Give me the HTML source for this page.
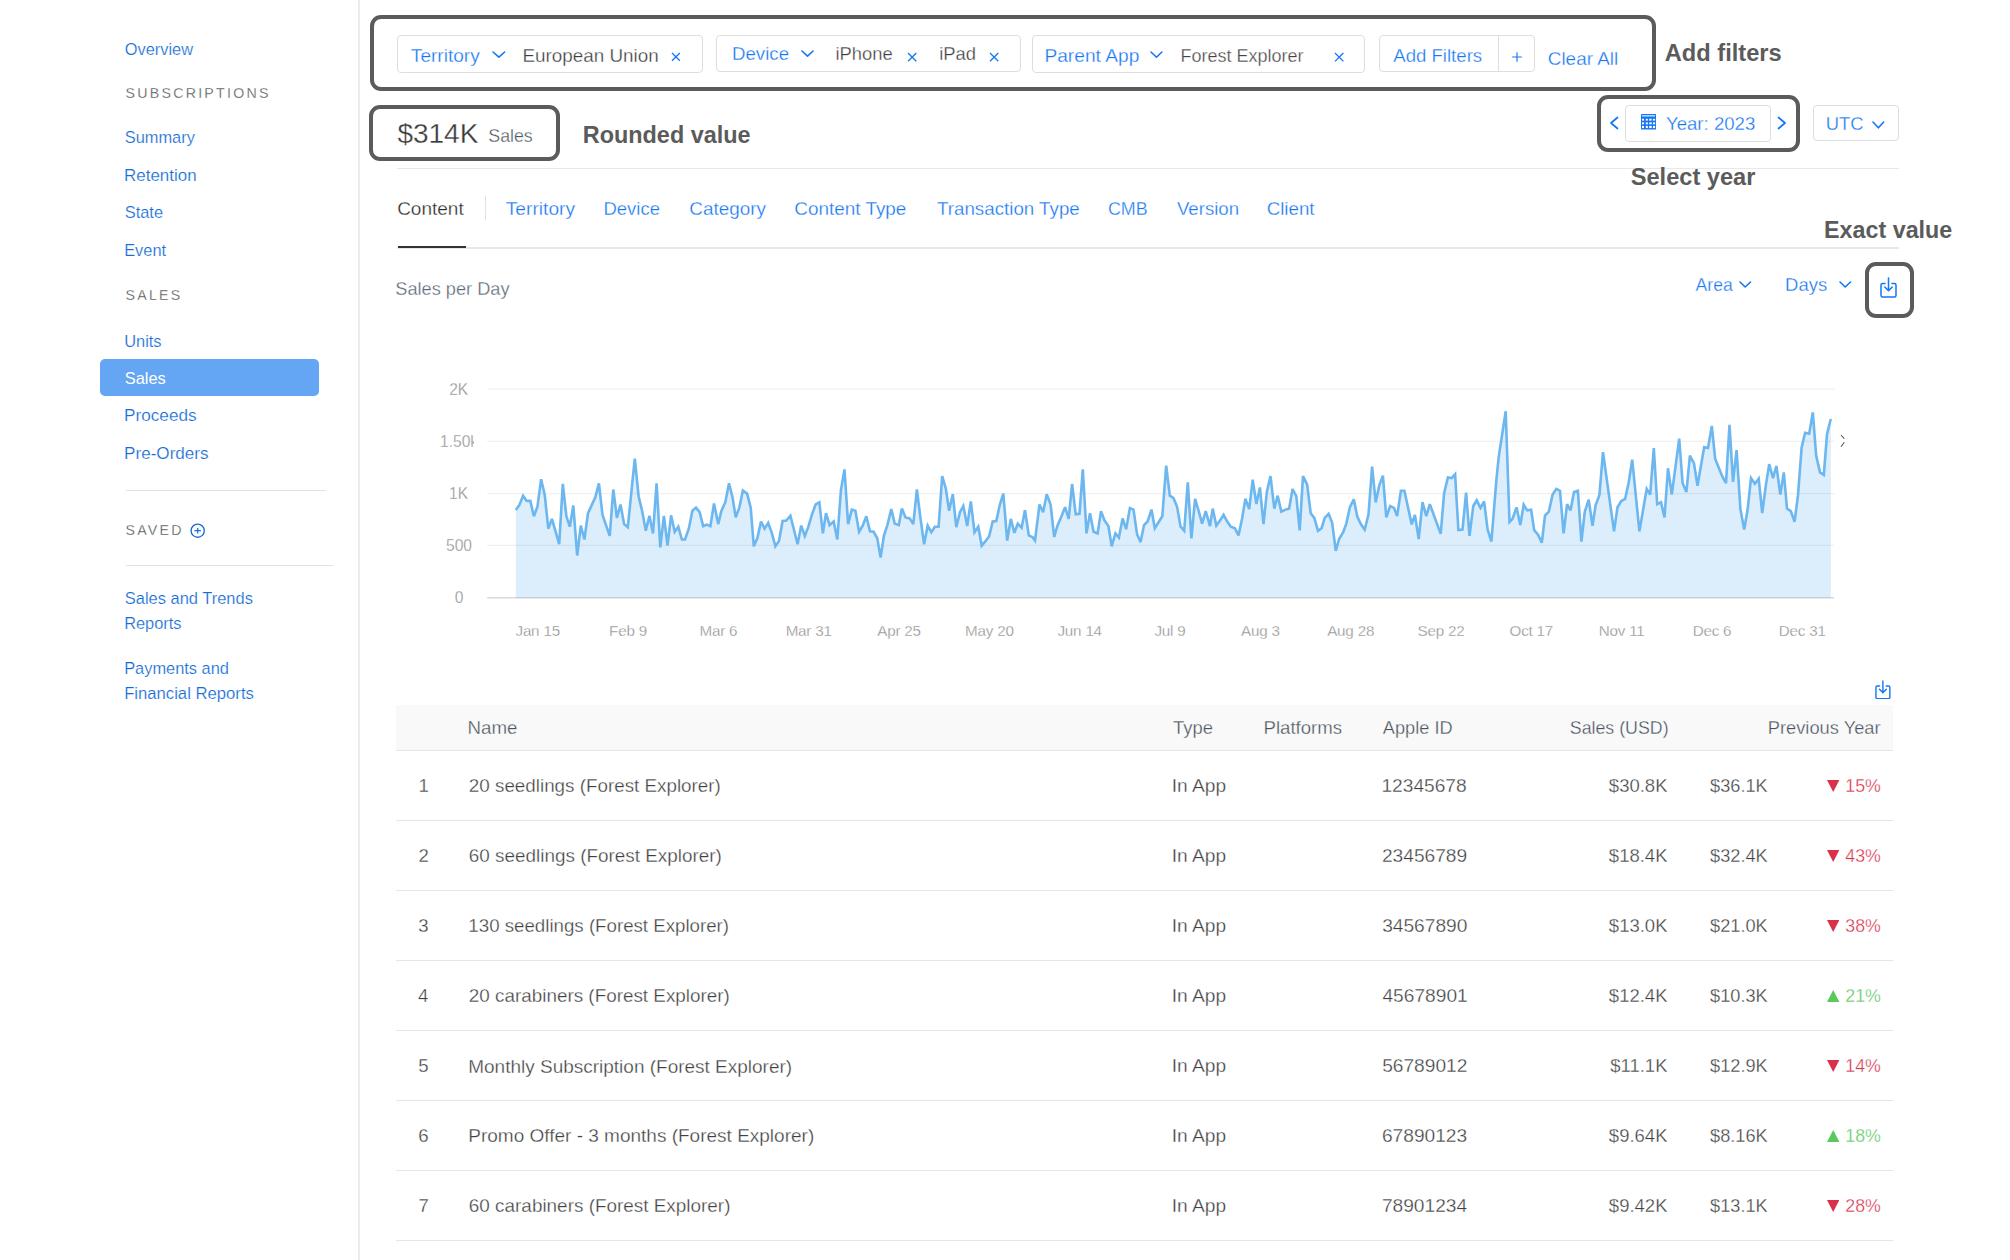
<!DOCTYPE html>
<html><head><meta charset="utf-8"><title>Sales</title>
<style>
html,body{margin:0;padding:0;background:#fff;overflow:hidden;}
body{width:2010px;height:1260px;position:relative;overflow:hidden;font-family:"Liberation Sans",sans-serif;}
.t{position:absolute;line-height:1;white-space:nowrap;-webkit-text-stroke:0.3px #fff;}
</style></head><body>
<div style="position:absolute;left:358.00px;top:0.00px;width:1.50px;height:1260.00px;background:#ececec;"></div>
<div class="t" style="top:41px;font-size:16.40px;color:#146cd6;left:124.72px;-webkit-text-stroke:0.2px #fff;">Overview</div>
<div class="t" style="top:86px;font-size:14.20px;color:#4a4a4a;letter-spacing:2.25px;left:125.50px;">SUBSCRIPTIONS</div>
<div class="t" style="top:129px;font-size:16.40px;color:#146cd6;left:124.76px;-webkit-text-stroke:0.2px #fff;">Summary</div>
<div class="t" style="top:168px;font-size:16.93px;color:#146cd6;left:124.11px;-webkit-text-stroke:0.2px #fff;">Retention</div>
<div class="t" style="top:204px;font-size:16.40px;color:#146cd6;left:124.76px;-webkit-text-stroke:0.2px #fff;">State</div>
<div class="t" style="top:242px;font-size:16.40px;color:#146cd6;left:124.15px;-webkit-text-stroke:0.2px #fff;">Event</div>
<div class="t" style="top:288px;font-size:14.20px;color:#4a4a4a;letter-spacing:2.25px;left:125.50px;">SALES</div>
<div class="t" style="top:333px;font-size:16.40px;color:#146cd6;left:124.23px;-webkit-text-stroke:0.2px #fff;">Units</div>
<div style="position:absolute;left:100.40px;top:358.60px;width:219.00px;height:37.00px;background:#64a5f4;border-radius:5px;"></div>
<div class="t" style="top:370px;font-size:16.40px;color:#ffffff;left:124.76px;-webkit-text-stroke:0;">Sales</div>
<div class="t" style="top:407px;font-size:17.17px;color:#146cd6;left:124.09px;-webkit-text-stroke:0.2px #fff;">Proceeds</div>
<div class="t" style="top:445px;font-size:17.09px;color:#146cd6;left:124.10px;-webkit-text-stroke:0.2px #fff;">Pre-Orders</div>
<div style="position:absolute;left:125.50px;top:490.00px;width:200.30px;height:1.00px;background:#e2e2e2;"></div>
<div class="t" style="top:523px;font-size:14.20px;color:#4a4a4a;letter-spacing:2.25px;left:125.50px;">SAVED</div>
<svg style="position:absolute;left:189.50px;top:523.00px;" width="15.40" height="15.40" viewBox="0 0 15.40 15.40"><circle cx="7.7" cy="7.7" r="6.6" fill="none" stroke="#146cd6" stroke-width="1.35"/><path d="M7.7 4.9v5.6M4.5 7.7h6.4" stroke="#146cd6" stroke-width="1.2"/></svg>
<div style="position:absolute;left:125.50px;top:565.30px;width:207.00px;height:1.00px;background:#e2e2e2;"></div>
<div class="t" style="top:590px;font-size:16.48px;color:#146cd6;left:124.75px;-webkit-text-stroke:0.2px #fff;">Sales and Trends</div>
<div class="t" style="top:615px;font-size:16.40px;color:#146cd6;left:124.15px;-webkit-text-stroke:0.2px #fff;">Reports</div>
<div class="t" style="top:660px;font-size:16.40px;color:#146cd6;left:124.15px;-webkit-text-stroke:0.2px #fff;">Payments and</div>
<div class="t" style="top:686px;font-size:16.68px;color:#146cd6;left:124.13px;-webkit-text-stroke:0.2px #fff;">Financial Reports</div>
<div style="position:absolute;left:370.00px;top:15.00px;width:1286.00px;height:76.00px;box-sizing:border-box;border:4px solid #5b5b5b;border-radius:11px;"></div>
<div style="position:absolute;left:397.00px;top:35.30px;width:306.00px;height:38.00px;box-sizing:border-box;border:1.5px solid #dedede;border-radius:4px;background:#fff;"></div>
<div class="t" style="top:46px;font-size:19.07px;color:#1476f2;left:410.87px;">Territory</div>
<svg style="position:absolute;left:492.30px;top:51.30px;" width="13.70" height="7.10" viewBox="0 0 13.70 7.10"><polyline points="1,1 6.9,6.1 12.7,1" fill="none" stroke="#1476f2" stroke-width="1.6" stroke-linecap="round" stroke-linejoin="round"/></svg>
<div class="t" style="top:47px;font-size:18.87px;color:#3d3d3d;left:522.45px;">European Union</div>
<svg style="position:absolute;left:671.30px;top:52.40px;" width="9.80" height="9.80" viewBox="0 0 9.80 9.80"><path d="M1 1L8.8 8.8M8.8 1L1 8.8" stroke="#1476f2" stroke-width="1.3" stroke-linecap="butt"/></svg>
<div style="position:absolute;left:715.60px;top:35.20px;width:305.00px;height:37.20px;box-sizing:border-box;border:1.5px solid #dedede;border-radius:4px;background:#fff;"></div>
<div class="t" style="top:45px;font-size:18.70px;color:#1476f2;left:731.97px;">Device</div>
<svg style="position:absolute;left:801.30px;top:50.20px;" width="13.10" height="7.10" viewBox="0 0 13.10 7.10"><polyline points="1,1 6.5,6.1 12.1,1" fill="none" stroke="#1476f2" stroke-width="1.6" stroke-linecap="round" stroke-linejoin="round"/></svg>
<div class="t" style="top:45px;font-size:18.40px;color:#3d3d3d;left:835.47px;">iPhone</div>
<svg style="position:absolute;left:907.20px;top:51.60px;" width="10.30" height="10.30" viewBox="0 0 10.30 10.30"><path d="M1 1L9.3 9.3M9.3 1L1 9.3" stroke="#1476f2" stroke-width="1.3" stroke-linecap="butt"/></svg>
<div class="t" style="top:45px;font-size:18.40px;color:#3d3d3d;left:939.27px;">iPad</div>
<svg style="position:absolute;left:989.20px;top:51.60px;" width="10.30" height="10.30" viewBox="0 0 10.30 10.30"><path d="M1 1L9.3 9.3M9.3 1L1 9.3" stroke="#1476f2" stroke-width="1.3" stroke-linecap="butt"/></svg>
<div style="position:absolute;left:1032.20px;top:35.30px;width:332.60px;height:37.80px;box-sizing:border-box;border:1.5px solid #dedede;border-radius:4px;background:#fff;"></div>
<div class="t" style="top:46px;font-size:19.18px;color:#1476f2;left:1044.43px;">Parent App</div>
<svg style="position:absolute;left:1150.40px;top:51.10px;" width="12.90" height="7.30" viewBox="0 0 12.90 7.30"><polyline points="1,1 6.5,6.3 11.9,1" fill="none" stroke="#1476f2" stroke-width="1.6" stroke-linecap="round" stroke-linejoin="round"/></svg>
<div class="t" style="top:47px;font-size:18.00px;color:#454545;left:1180.52px;">Forest Explorer</div>
<svg style="position:absolute;left:1334.30px;top:52.10px;" width="10.40" height="10.40" viewBox="0 0 10.40 10.40"><path d="M1 1L9.4 9.4M9.4 1L1 9.4" stroke="#1476f2" stroke-width="1.3" stroke-linecap="butt"/></svg>
<div style="position:absolute;left:1378.60px;top:35.20px;width:156.00px;height:36.50px;box-sizing:border-box;border:1.5px solid #dedede;border-radius:4px;background:#fff;"></div>
<div style="position:absolute;left:1498.00px;top:35.20px;width:1.20px;height:36.50px;background:#dedede;"></div>
<div class="t" style="top:47px;font-size:18.60px;color:#1476f2;left:1393.26px;">Add Filters</div>
<svg style="position:absolute;left:1510.60px;top:50.50px;" width="12.00" height="12.00" viewBox="0 0 12.00 12.00"><path d="M6 1.2v9.6M1.2 6h9.6" stroke="#1476f2" stroke-width="1.15"/></svg>
<div class="t" style="top:50px;font-size:18.93px;color:#1476f2;left:1547.74px;">Clear All</div>
<div class="t" style="top:42px;font-size:23.65px;color:#5b5b5b;font-weight:700;-webkit-text-stroke:0;left:1664.81px;">Add filters</div>
<div style="position:absolute;left:368.60px;top:105.20px;width:191.40px;height:55.50px;box-sizing:border-box;border:4px solid #5b5b5b;border-radius:11px;"></div>
<div class="t" style="top:120px;font-size:28.00px;color:#3a3a3a;left:397.40px;">$314K</div>
<div class="t" style="top:128px;font-size:17.80px;color:#4d5864;left:488.29px;">Sales</div>
<div class="t" style="top:124px;font-size:23.40px;color:#5b5b5b;font-weight:700;-webkit-text-stroke:0;left:582.83px;">Rounded value</div>
<div style="position:absolute;left:397.00px;top:167.60px;width:1502.00px;height:1.50px;background:#e8e8e8;"></div>
<div style="position:absolute;left:1597.20px;top:95.10px;width:202.60px;height:57.00px;box-sizing:border-box;border:4px solid #5b5b5b;border-radius:11px;"></div>
<svg style="position:absolute;left:1609.00px;top:116.00px;" width="11.00" height="14.00" viewBox="0 0 11.00 14.00"><polyline points="8.5,1.5 2,7 8.5,12.5" fill="none" stroke="#1476f2" stroke-width="1.7" stroke-linecap="round" stroke-linejoin="round"/></svg>
<div style="position:absolute;left:1624.70px;top:105.10px;width:146.00px;height:36.60px;box-sizing:border-box;border:1.5px solid #dedede;border-radius:4px;background:#fff;"></div>
<svg style="position:absolute;left:1641.00px;top:114.40px;" width="15.10" height="15.50" viewBox="0 0 15.10 15.50"><rect x="0" y="0" width="15.1" height="15.5" rx="0.6" fill="#1476f2"/><rect x="1.0" y="1.3" width="13.1" height="1.1" fill="#fff"/><rect x="1.0" y="4.8" width="2.0" height="1.8" fill="#fff"/><rect x="1.0" y="8.4" width="2.0" height="1.9" fill="#fff"/><rect x="1.0" y="11.9" width="2.0" height="2.2" fill="#fff"/><rect x="4.8" y="4.8" width="2.0" height="1.8" fill="#fff"/><rect x="4.8" y="8.4" width="2.0" height="1.9" fill="#fff"/><rect x="4.8" y="11.9" width="2.0" height="2.2" fill="#fff"/><rect x="8.2" y="4.8" width="2.5" height="1.8" fill="#fff"/><rect x="8.2" y="8.4" width="2.5" height="1.9" fill="#fff"/><rect x="8.2" y="11.9" width="2.5" height="2.2" fill="#fff"/><rect x="11.9" y="4.8" width="2.2" height="1.8" fill="#fff"/><rect x="11.9" y="8.4" width="2.2" height="1.9" fill="#fff"/><rect x="11.9" y="11.9" width="2.2" height="2.2" fill="#fff"/></svg>
<div class="t" style="top:115px;font-size:18.60px;color:#1476f2;left:1665.99px;">Year: 2023</div>
<svg style="position:absolute;left:1775.60px;top:116.00px;" width="11.00" height="14.00" viewBox="0 0 11.00 14.00"><polyline points="2.5,1.5 9,7 2.5,12.5" fill="none" stroke="#1476f2" stroke-width="1.7" stroke-linecap="round" stroke-linejoin="round"/></svg>
<div style="position:absolute;left:1812.60px;top:105.10px;width:86.00px;height:35.50px;box-sizing:border-box;border:1.5px solid #dedede;border-radius:4px;background:#fff;"></div>
<div class="t" style="top:115px;font-size:18.40px;color:#1476f2;left:1825.78px;">UTC</div>
<svg style="position:absolute;left:1872.40px;top:120.80px;" width="12.70" height="7.80" viewBox="0 0 12.70 7.80"><polyline points="1,1 6.4,6.8 11.7,1" fill="none" stroke="#1476f2" stroke-width="1.6" stroke-linecap="round" stroke-linejoin="round"/></svg>
<div class="t" style="top:166px;font-size:23.60px;color:#5b5b5b;font-weight:700;-webkit-text-stroke:0;left:1630.72px;">Select year</div>
<div class="t" style="top:199px;font-size:19.00px;color:#262626;left:397.14px;">Content</div>
<div style="position:absolute;left:485.20px;top:195.70px;width:1.20px;height:24.30px;background:#e2e2e2;"></div>
<div class="t" style="top:199px;font-size:19.20px;color:#1476f2;left:505.77px;">Territory</div>
<div class="t" style="top:200px;font-size:18.50px;color:#1476f2;left:603.48px;">Device</div>
<div class="t" style="top:200px;font-size:18.90px;color:#1476f2;left:689.24px;">Category</div>
<div class="t" style="top:200px;font-size:18.90px;color:#1476f2;left:794.34px;">Content Type</div>
<div class="t" style="top:200px;font-size:18.75px;color:#1476f2;left:936.98px;">Transaction Type</div>
<div class="t" style="top:201px;font-size:17.90px;color:#1476f2;left:1107.89px;">CMB</div>
<div class="t" style="top:200px;font-size:18.65px;color:#1476f2;left:1176.92px;">Version</div>
<div class="t" style="top:200px;font-size:18.75px;color:#1476f2;left:1266.65px;">Client</div>
<div style="position:absolute;left:397.00px;top:247.00px;width:1502.00px;height:1.50px;background:#e8e8e8;"></div>
<div style="position:absolute;left:398.00px;top:245.80px;width:67.60px;height:2.60px;background:#333;"></div>
<div class="t" style="top:219px;font-size:23.30px;color:#5b5b5b;font-weight:700;-webkit-text-stroke:0;left:1824.04px;">Exact value</div>
<div class="t" style="top:280px;font-size:18.20px;color:#5b6776;left:395.27px;">Sales per Day</div>
<div class="t" style="top:277px;font-size:17.60px;color:#1476f2;left:1695.57px;">Area</div>
<svg style="position:absolute;left:1739.00px;top:281.10px;" width="12.50" height="7.00" viewBox="0 0 12.50 7.00"><polyline points="1,1 6.2,6.0 11.5,1" fill="none" stroke="#1476f2" stroke-width="1.6" stroke-linecap="round" stroke-linejoin="round"/></svg>
<div class="t" style="top:276px;font-size:18.52px;color:#1476f2;left:1785.08px;">Days</div>
<svg style="position:absolute;left:1839.30px;top:281.10px;" width="12.50" height="7.00" viewBox="0 0 12.50 7.00"><polyline points="1,1 6.2,6.0 11.5,1" fill="none" stroke="#1476f2" stroke-width="1.6" stroke-linecap="round" stroke-linejoin="round"/></svg>
<div style="position:absolute;left:1865.30px;top:262.20px;width:48.40px;height:55.80px;box-sizing:border-box;border:4px solid #5b5b5b;border-radius:11px;"></div>
<svg style="position:absolute;left:1880.00px;top:277.00px" width="17.00" height="21.00" viewBox="0 0 17 21"><path d="M5 6.5H2.5Q1 6.5 1 8V18.5Q1 20 2.5 20H14.5Q16 20 16 18.5V8Q16 6.5 14.5 6.5H12" fill="none" stroke="#1476f2" stroke-width="1.5" stroke-linecap="round"/><path d="M8.5 1V13.5M4.8 10L8.5 13.7L12.2 10" fill="none" stroke="#1476f2" stroke-width="1.5" stroke-linecap="round" stroke-linejoin="round"/></svg>
<div class="t" style="top:382px;font-size:15.60px;color:#8c8c8c;left:-41.30px;width:1000px;text-align:center;">2K</div>
<div style="position:absolute;left:430px;top:434.00px;width:44px;height:20px;overflow:hidden;"><div class="t" style="left:0;top:0;width:1000px;text-align:left;font-size:15.6px;color:#8c8c8c;left:10px">1.50k</div></div>
<div class="t" style="top:486px;font-size:15.60px;color:#8c8c8c;left:-41.51px;width:1000px;text-align:center;">1K</div>
<div class="t" style="top:538px;font-size:15.60px;color:#8c8c8c;left:-41.01px;width:1000px;text-align:center;">500</div>
<div class="t" style="top:590px;font-size:15.60px;color:#8c8c8c;left:-41.00px;width:1000px;text-align:center;">0</div>
<svg style="position:absolute;left:0.00px;top:0.00px;pointer-events:none;" width="2010.00" height="1260.00" viewBox="0 0 2010.00 1260.00"><polygon points="515.8,597.8 515.8,510.1 519.4,505.0 523.1,495.7 526.7,500.9 530.3,500.9 533.9,516.3 537.5,506.5 541.1,479.2 544.7,494.7 548.3,528.7 551.9,518.9 559.2,544.2 562.8,483.8 566.4,516.3 569.8,526.7 573.3,505.5 577.2,555.5 580.8,525.6 584.4,539.5 588.0,513.2 595.3,497.3 598.9,483.3 602.5,514.8 609.7,535.9 613.3,489.5 616.9,517.9 620.5,504.5 624.1,524.1 627.8,527.2 634.8,458.6 638.6,496.2 642.2,511.2 645.8,530.8 649.4,515.8 653.0,533.4 656.6,483.3 660.3,547.3 663.9,515.8 667.5,545.7 671.1,515.3 674.7,531.8 678.3,526.7 681.9,539.5 685.0,539.5 688.8,528.7 692.4,510.7 696.0,507.6 699.6,512.2 703.2,526.1 706.8,524.6 710.4,526.1 714.0,503.4 718.2,524.1 721.3,511.2 725.4,501.9 729.0,483.3 732.6,497.8 735.7,517.4 739.3,507.6 742.9,490.5 747.1,493.6 750.7,507.6 753.8,546.3 757.4,538.0 761.0,521.5 764.6,528.7 768.2,523.0 771.8,532.8 775.4,546.3 779.0,541.1 782.6,521.0 786.3,520.5 790.4,515.8 797.6,544.2 801.2,525.6 804.8,535.9 808.4,526.7 812.0,514.3 815.7,504.5 819.3,502.4 822.9,533.4 826.0,513.2 829.6,525.1 833.7,521.5 837.3,539.5 840.9,490.5 844.5,469.4 848.1,524.1 851.8,509.6 855.4,510.7 859.1,531.8 862.7,525.6 866.3,516.3 870.0,531.3 873.6,531.8 877.2,538.0 880.6,557.6 883.9,535.9 887.5,524.6 891.3,509.1 894.7,523.6 898.8,525.1 901.9,508.6 905.5,517.4 909.7,518.4 913.3,524.1 916.9,489.5 920.5,518.4 924.1,544.2 927.7,525.6 931.3,532.3 934.9,526.7 938.6,526.7 942.2,476.1 945.8,488.5 949.1,510.7 952.8,494.2 956.3,527.2 960.0,512.2 963.3,506.0 967.2,526.1 970.8,501.4 974.5,532.3 978.3,526.7 981.7,545.7 985.5,541.1 989.1,536.5 992.7,521.5 996.3,521.0 999.9,504.5 1003.3,493.6 1007.2,540.6 1010.8,518.9 1014.4,532.8 1017.8,523.6 1021.6,527.7 1025.0,510.1 1028.8,535.4 1032.4,537.0 1035.0,540.6 1039.5,504.5 1043.1,512.2 1046.7,494.2 1050.6,504.5 1054.2,537.0 1057.6,525.1 1061.5,516.3 1065.1,507.1 1068.7,518.9 1072.1,483.8 1075.7,514.3 1079.5,513.8 1082.8,469.4 1086.5,533.4 1090.0,513.2 1093.6,531.8 1097.6,533.4 1101.0,511.2 1104.5,520.5 1108.4,526.1 1111.7,546.3 1115.4,533.4 1118.9,537.5 1122.6,518.4 1126.1,529.2 1129.9,508.1 1133.5,509.6 1137.1,534.4 1140.6,542.1 1144.0,525.1 1147.6,521.5 1151.5,509.6 1154.8,528.2 1158.7,522.0 1162.3,516.3 1166.2,465.6 1169.8,495.7 1173.4,497.8 1177.0,506.5 1180.6,526.7 1184.2,530.8 1187.8,482.3 1191.4,538.5 1195.1,498.8 1198.7,511.2 1202.1,523.6 1205.7,511.2 1210.0,526.1 1212.7,508.6 1216.3,525.6 1220.0,520.5 1223.6,514.8 1227.2,521.5 1230.8,526.7 1234.9,528.2 1238.5,535.4 1242.1,518.4 1245.4,498.8 1249.2,509.1 1252.7,479.7 1256.4,504.0 1259.9,487.5 1263.5,524.1 1266.9,491.6 1270.5,476.1 1274.3,508.6 1277.7,495.7 1281.3,511.7 1285.5,509.6 1289.1,508.6 1292.5,489.0 1296.3,496.2 1299.7,530.3 1303.0,476.1 1307.1,484.4 1310.7,513.2 1314.3,517.9 1318.0,530.8 1321.6,528.2 1324.7,517.9 1328.6,513.8 1332.1,522.5 1335.8,550.9 1339.1,539.0 1343.2,532.3 1346.3,523.6 1349.9,507.1 1353.8,499.3 1357.2,516.3 1360.8,524.1 1364.7,529.7 1368.5,514.3 1372.1,466.6 1375.7,502.4 1379.3,485.4 1382.9,475.6 1386.3,517.4 1390.2,506.0 1394.0,507.9 1397.1,516.1 1400.9,490.8 1404.4,490.8 1411.7,524.4 1414.9,514.9 1418.7,539.0 1422.5,502.2 1426.3,516.1 1429.8,504.1 1440.7,533.9 1444.1,493.3 1447.9,477.4 1451.7,478.1 1455.1,474.3 1458.4,530.1 1462.5,529.5 1466.1,492.7 1469.5,535.8 1473.3,506.0 1476.7,500.3 1480.5,507.9 1484.1,501.5 1487.6,529.5 1491.4,541.5 1496.5,478.7 1498.7,457.1 1505.7,411.2 1509.5,521.9 1512.6,518.7 1516.5,507.3 1520.3,525.0 1523.7,504.7 1527.2,510.4 1531.1,509.8 1534.2,530.1 1538.0,534.6 1541.8,542.8 1545.0,515.5 1548.8,511.7 1552.6,494.6 1556.4,488.9 1560.0,490.8 1563.6,533.3 1567.1,504.1 1570.5,510.5 1574.0,492.1 1577.9,490.8 1581.4,541.6 1584.8,511.7 1588.7,499.7 1592.5,525.7 1595.6,505.4 1599.4,495.2 1603.0,452.1 1614.0,531.4 1617.5,507.3 1621.3,501.0 1625.1,499.0 1628.7,482.5 1632.2,459.7 1639.4,531.4 1646.7,488.9 1650.2,494.6 1653.8,448.0 1657.2,504.1 1661.0,502.2 1664.5,517.5 1668.0,468.3 1671.8,494.6 1679.2,438.7 1682.6,483.2 1686.4,492.1 1689.9,455.6 1694.0,463.5 1697.5,485.7 1704.2,447.0 1708.0,448.0 1711.8,426.0 1715.2,459.0 1722.2,476.2 1726.0,483.2 1729.5,424.8 1733.0,481.9 1736.6,450.2 1740.4,509.2 1744.2,529.5 1747.6,509.8 1751.0,478.1 1754.9,483.8 1758.7,478.7 1762.2,513.0 1766.0,484.4 1769.2,464.1 1773.0,478.1 1776.4,466.0 1780.3,494.6 1783.8,472.4 1787.0,508.6 1790.8,511.1 1794.6,521.7 1798.0,495.2 1801.6,447.6 1805.1,432.8 1809.2,433.7 1812.8,412.4 1816.2,455.9 1820.0,472.4 1823.8,474.9 1827.0,434.3 1830.8,419.0 1830.8,597.8" fill="#dcedfb"/><rect x="487.2" y="388.45" width="1347" height="1.3" fill="rgba(0,0,0,0.06)"/><rect x="487.2" y="440.65" width="1347" height="1.3" fill="rgba(0,0,0,0.06)"/><rect x="487.2" y="492.95" width="1347" height="1.3" fill="rgba(0,0,0,0.06)"/><rect x="487.2" y="544.75" width="1347" height="1.3" fill="rgba(0,0,0,0.06)"/><rect x="487.2" y="597.05" width="1347" height="1.5" fill="rgba(0,20,40,0.16)"/><polyline points="515.8,510.1 519.4,505.0 523.1,495.7 526.7,500.9 530.3,500.9 533.9,516.3 537.5,506.5 541.1,479.2 544.7,494.7 548.3,528.7 551.9,518.9 559.2,544.2 562.8,483.8 566.4,516.3 569.8,526.7 573.3,505.5 577.2,555.5 580.8,525.6 584.4,539.5 588.0,513.2 595.3,497.3 598.9,483.3 602.5,514.8 609.7,535.9 613.3,489.5 616.9,517.9 620.5,504.5 624.1,524.1 627.8,527.2 634.8,458.6 638.6,496.2 642.2,511.2 645.8,530.8 649.4,515.8 653.0,533.4 656.6,483.3 660.3,547.3 663.9,515.8 667.5,545.7 671.1,515.3 674.7,531.8 678.3,526.7 681.9,539.5 685.0,539.5 688.8,528.7 692.4,510.7 696.0,507.6 699.6,512.2 703.2,526.1 706.8,524.6 710.4,526.1 714.0,503.4 718.2,524.1 721.3,511.2 725.4,501.9 729.0,483.3 732.6,497.8 735.7,517.4 739.3,507.6 742.9,490.5 747.1,493.6 750.7,507.6 753.8,546.3 757.4,538.0 761.0,521.5 764.6,528.7 768.2,523.0 771.8,532.8 775.4,546.3 779.0,541.1 782.6,521.0 786.3,520.5 790.4,515.8 797.6,544.2 801.2,525.6 804.8,535.9 808.4,526.7 812.0,514.3 815.7,504.5 819.3,502.4 822.9,533.4 826.0,513.2 829.6,525.1 833.7,521.5 837.3,539.5 840.9,490.5 844.5,469.4 848.1,524.1 851.8,509.6 855.4,510.7 859.1,531.8 862.7,525.6 866.3,516.3 870.0,531.3 873.6,531.8 877.2,538.0 880.6,557.6 883.9,535.9 887.5,524.6 891.3,509.1 894.7,523.6 898.8,525.1 901.9,508.6 905.5,517.4 909.7,518.4 913.3,524.1 916.9,489.5 920.5,518.4 924.1,544.2 927.7,525.6 931.3,532.3 934.9,526.7 938.6,526.7 942.2,476.1 945.8,488.5 949.1,510.7 952.8,494.2 956.3,527.2 960.0,512.2 963.3,506.0 967.2,526.1 970.8,501.4 974.5,532.3 978.3,526.7 981.7,545.7 985.5,541.1 989.1,536.5 992.7,521.5 996.3,521.0 999.9,504.5 1003.3,493.6 1007.2,540.6 1010.8,518.9 1014.4,532.8 1017.8,523.6 1021.6,527.7 1025.0,510.1 1028.8,535.4 1032.4,537.0 1035.0,540.6 1039.5,504.5 1043.1,512.2 1046.7,494.2 1050.6,504.5 1054.2,537.0 1057.6,525.1 1061.5,516.3 1065.1,507.1 1068.7,518.9 1072.1,483.8 1075.7,514.3 1079.5,513.8 1082.8,469.4 1086.5,533.4 1090.0,513.2 1093.6,531.8 1097.6,533.4 1101.0,511.2 1104.5,520.5 1108.4,526.1 1111.7,546.3 1115.4,533.4 1118.9,537.5 1122.6,518.4 1126.1,529.2 1129.9,508.1 1133.5,509.6 1137.1,534.4 1140.6,542.1 1144.0,525.1 1147.6,521.5 1151.5,509.6 1154.8,528.2 1158.7,522.0 1162.3,516.3 1166.2,465.6 1169.8,495.7 1173.4,497.8 1177.0,506.5 1180.6,526.7 1184.2,530.8 1187.8,482.3 1191.4,538.5 1195.1,498.8 1198.7,511.2 1202.1,523.6 1205.7,511.2 1210.0,526.1 1212.7,508.6 1216.3,525.6 1220.0,520.5 1223.6,514.8 1227.2,521.5 1230.8,526.7 1234.9,528.2 1238.5,535.4 1242.1,518.4 1245.4,498.8 1249.2,509.1 1252.7,479.7 1256.4,504.0 1259.9,487.5 1263.5,524.1 1266.9,491.6 1270.5,476.1 1274.3,508.6 1277.7,495.7 1281.3,511.7 1285.5,509.6 1289.1,508.6 1292.5,489.0 1296.3,496.2 1299.7,530.3 1303.0,476.1 1307.1,484.4 1310.7,513.2 1314.3,517.9 1318.0,530.8 1321.6,528.2 1324.7,517.9 1328.6,513.8 1332.1,522.5 1335.8,550.9 1339.1,539.0 1343.2,532.3 1346.3,523.6 1349.9,507.1 1353.8,499.3 1357.2,516.3 1360.8,524.1 1364.7,529.7 1368.5,514.3 1372.1,466.6 1375.7,502.4 1379.3,485.4 1382.9,475.6 1386.3,517.4 1390.2,506.0 1394.0,507.9 1397.1,516.1 1400.9,490.8 1404.4,490.8 1411.7,524.4 1414.9,514.9 1418.7,539.0 1422.5,502.2 1426.3,516.1 1429.8,504.1 1440.7,533.9 1444.1,493.3 1447.9,477.4 1451.7,478.1 1455.1,474.3 1458.4,530.1 1462.5,529.5 1466.1,492.7 1469.5,535.8 1473.3,506.0 1476.7,500.3 1480.5,507.9 1484.1,501.5 1487.6,529.5 1491.4,541.5 1496.5,478.7 1498.7,457.1 1505.7,411.2 1509.5,521.9 1512.6,518.7 1516.5,507.3 1520.3,525.0 1523.7,504.7 1527.2,510.4 1531.1,509.8 1534.2,530.1 1538.0,534.6 1541.8,542.8 1545.0,515.5 1548.8,511.7 1552.6,494.6 1556.4,488.9 1560.0,490.8 1563.6,533.3 1567.1,504.1 1570.5,510.5 1574.0,492.1 1577.9,490.8 1581.4,541.6 1584.8,511.7 1588.7,499.7 1592.5,525.7 1595.6,505.4 1599.4,495.2 1603.0,452.1 1614.0,531.4 1617.5,507.3 1621.3,501.0 1625.1,499.0 1628.7,482.5 1632.2,459.7 1639.4,531.4 1646.7,488.9 1650.2,494.6 1653.8,448.0 1657.2,504.1 1661.0,502.2 1664.5,517.5 1668.0,468.3 1671.8,494.6 1679.2,438.7 1682.6,483.2 1686.4,492.1 1689.9,455.6 1694.0,463.5 1697.5,485.7 1704.2,447.0 1708.0,448.0 1711.8,426.0 1715.2,459.0 1722.2,476.2 1726.0,483.2 1729.5,424.8 1733.0,481.9 1736.6,450.2 1740.4,509.2 1744.2,529.5 1747.6,509.8 1751.0,478.1 1754.9,483.8 1758.7,478.7 1762.2,513.0 1766.0,484.4 1769.2,464.1 1773.0,478.1 1776.4,466.0 1780.3,494.6 1783.8,472.4 1787.0,508.6 1790.8,511.1 1794.6,521.7 1798.0,495.2 1801.6,447.6 1805.1,432.8 1809.2,433.7 1812.8,412.4 1816.2,455.9 1820.0,472.4 1823.8,474.9 1827.0,434.3 1830.8,419.0" fill="none" stroke="#6cb7f0" stroke-width="2.6" stroke-linejoin="miter" stroke-miterlimit="3"/></svg>
<div class="t" style="top:623px;font-size:15.20px;color:#8c8c8c;letter-spacing:-0.20px;left:37.70px;width:1000px;text-align:center;">Jan 15</div>
<div class="t" style="top:623px;font-size:15.20px;color:#8c8c8c;letter-spacing:-0.20px;left:128.03px;width:1000px;text-align:center;">Feb 9</div>
<div class="t" style="top:623px;font-size:15.20px;color:#8c8c8c;letter-spacing:-0.20px;left:218.36px;width:1000px;text-align:center;">Mar 6</div>
<div class="t" style="top:623px;font-size:15.20px;color:#8c8c8c;letter-spacing:-0.20px;left:308.69px;width:1000px;text-align:center;">Mar 31</div>
<div class="t" style="top:623px;font-size:15.20px;color:#8c8c8c;letter-spacing:-0.20px;left:399.02px;width:1000px;text-align:center;">Apr 25</div>
<div class="t" style="top:623px;font-size:15.20px;color:#8c8c8c;letter-spacing:-0.20px;left:489.35px;width:1000px;text-align:center;">May 20</div>
<div class="t" style="top:623px;font-size:15.20px;color:#8c8c8c;letter-spacing:-0.20px;left:579.68px;width:1000px;text-align:center;">Jun 14</div>
<div class="t" style="top:623px;font-size:15.20px;color:#8c8c8c;letter-spacing:-0.20px;left:670.01px;width:1000px;text-align:center;">Jul 9</div>
<div class="t" style="top:623px;font-size:15.20px;color:#8c8c8c;letter-spacing:-0.20px;left:760.34px;width:1000px;text-align:center;">Aug 3</div>
<div class="t" style="top:623px;font-size:15.20px;color:#8c8c8c;letter-spacing:-0.20px;left:850.67px;width:1000px;text-align:center;">Aug 28</div>
<div class="t" style="top:623px;font-size:15.20px;color:#8c8c8c;letter-spacing:-0.20px;left:941.00px;width:1000px;text-align:center;">Sep 22</div>
<div class="t" style="top:623px;font-size:15.20px;color:#8c8c8c;letter-spacing:-0.20px;left:1031.33px;width:1000px;text-align:center;">Oct 17</div>
<div class="t" style="top:623px;font-size:15.20px;color:#8c8c8c;letter-spacing:-0.20px;left:1121.66px;width:1000px;text-align:center;">Nov 11</div>
<div class="t" style="top:623px;font-size:15.20px;color:#8c8c8c;letter-spacing:-0.20px;left:1211.99px;width:1000px;text-align:center;">Dec 6</div>
<div class="t" style="top:623px;font-size:15.20px;color:#8c8c8c;letter-spacing:-0.20px;left:1302.32px;width:1000px;text-align:center;">Dec 31</div>
<svg style="position:absolute;left:1838.00px;top:433.00px;" width="9.00" height="16.00" viewBox="0 0 9.00 16.00"><path d="M3 2L6.3 5.6M6.3 9.2L3 13.8" fill="none" stroke="#555" stroke-width="1.1"/></svg>
<svg style="position:absolute;left:1875.00px;top:679.50px" width="15.81" height="19.53" viewBox="0 0 17 21"><path d="M5 6.5H2.5Q1 6.5 1 8V18.5Q1 20 2.5 20H14.5Q16 20 16 18.5V8Q16 6.5 14.5 6.5H12" fill="none" stroke="#1476f2" stroke-width="1.5" stroke-linecap="round"/><path d="M8.5 1V13.5M4.8 10L8.5 13.7L12.2 10" fill="none" stroke="#1476f2" stroke-width="1.5" stroke-linecap="round" stroke-linejoin="round"/></svg>
<div style="position:absolute;left:396.00px;top:704.50px;width:1497.00px;height:46.00px;background:#f9f9f9;"></div>
<div style="position:absolute;left:396.00px;top:749.80px;width:1497.00px;height:1.50px;background:#e6e6e6;"></div>
<div class="t" style="top:719px;font-size:18.73px;color:#48525d;left:467.46px;">Name</div>
<div class="t" style="top:719px;font-size:18.40px;color:#48525d;left:1173.09px;">Type</div>
<div class="t" style="top:719px;font-size:18.60px;color:#48525d;left:1263.57px;">Platforms</div>
<div class="t" style="top:719px;font-size:18.20px;color:#48525d;left:1382.86px;">Apple ID</div>
<div class="t" style="top:720px;font-size:17.80px;color:#48525d;left:668.60px;width:1000px;text-align:right;">Sales (USD)</div>
<div class="t" style="top:719px;font-size:18.30px;color:#48525d;left:880.60px;width:1000px;text-align:right;">Previous Year</div>
<div class="t" style="top:777px;font-size:18.60px;color:#3f3f3f;left:-571.29px;width:1000px;text-align:right;">1</div>
<div class="t" style="top:777px;font-size:18.82px;color:#3f3f3f;left:468.85px;">20 seedlings (Forest Explorer)</div>
<div class="t" style="top:776px;font-size:19.19px;color:#3f3f3f;left:1171.73px;">In App</div>
<div class="t" style="top:776px;font-size:19.17px;color:#3f3f3f;left:1381.44px;">12345678</div>
<div class="t" style="top:777px;font-size:18.50px;color:#3f3f3f;left:667.51px;width:1000px;text-align:right;">$30.8K</div>
<div class="t" style="top:777px;font-size:18.20px;color:#3f3f3f;left:767.70px;width:1000px;text-align:right;">$36.1K</div>
<div class="t" style="top:778px;font-size:17.80px;color:#d8324b;left:880.93px;width:1000px;text-align:right;">15%</div>
<svg style="position:absolute;left:1827.07px;top:779.50px" width="12.4" height="12" viewBox="0 0 12.4 12"><polygon points="0,0 12.4,0 6.2,12" fill="#d8324b"/></svg>
<div style="position:absolute;left:396.00px;top:820.00px;width:1497.00px;height:1.20px;background:#e6e6e6;"></div>
<div class="t" style="top:847px;font-size:18.60px;color:#3f3f3f;left:-571.26px;width:1000px;text-align:right;">2</div>
<div class="t" style="top:847px;font-size:18.90px;color:#3f3f3f;left:468.84px;">60 seedlings (Forest Explorer)</div>
<div class="t" style="top:846px;font-size:19.19px;color:#3f3f3f;left:1171.73px;">In App</div>
<div class="t" style="top:846px;font-size:19.17px;color:#3f3f3f;left:1381.94px;">23456789</div>
<div class="t" style="top:847px;font-size:18.50px;color:#3f3f3f;left:667.51px;width:1000px;text-align:right;">$18.4K</div>
<div class="t" style="top:847px;font-size:18.20px;color:#3f3f3f;left:767.70px;width:1000px;text-align:right;">$32.4K</div>
<div class="t" style="top:848px;font-size:17.80px;color:#d8324b;left:880.93px;width:1000px;text-align:right;">43%</div>
<svg style="position:absolute;left:1827.07px;top:849.55px" width="12.4" height="12" viewBox="0 0 12.4 12"><polygon points="0,0 12.4,0 6.2,12" fill="#d8324b"/></svg>
<div style="position:absolute;left:396.00px;top:890.05px;width:1497.00px;height:1.20px;background:#e6e6e6;"></div>
<div class="t" style="top:917px;font-size:18.60px;color:#3f3f3f;left:-571.38px;width:1000px;text-align:right;">3</div>
<div class="t" style="top:917px;font-size:18.72px;color:#3f3f3f;left:468.37px;">130 seedlings (Forest Explorer)</div>
<div class="t" style="top:916px;font-size:19.19px;color:#3f3f3f;left:1171.73px;">In App</div>
<div class="t" style="top:916px;font-size:19.17px;color:#3f3f3f;left:1382.17px;">34567890</div>
<div class="t" style="top:917px;font-size:18.50px;color:#3f3f3f;left:667.51px;width:1000px;text-align:right;">$13.0K</div>
<div class="t" style="top:917px;font-size:18.20px;color:#3f3f3f;left:767.70px;width:1000px;text-align:right;">$21.0K</div>
<div class="t" style="top:918px;font-size:17.80px;color:#d8324b;left:880.93px;width:1000px;text-align:right;">38%</div>
<svg style="position:absolute;left:1827.07px;top:919.60px" width="12.4" height="12" viewBox="0 0 12.4 12"><polygon points="0,0 12.4,0 6.2,12" fill="#d8324b"/></svg>
<div style="position:absolute;left:396.00px;top:960.10px;width:1497.00px;height:1.20px;background:#e6e6e6;"></div>
<div class="t" style="top:987px;font-size:18.60px;color:#3f3f3f;left:-571.66px;width:1000px;text-align:right;">4</div>
<div class="t" style="top:987px;font-size:18.87px;color:#3f3f3f;left:468.85px;">20 carabiners (Forest Explorer)</div>
<div class="t" style="top:986px;font-size:19.19px;color:#3f3f3f;left:1171.73px;">In App</div>
<div class="t" style="top:986px;font-size:19.17px;color:#3f3f3f;left:1382.46px;">45678901</div>
<div class="t" style="top:987px;font-size:18.50px;color:#3f3f3f;left:667.51px;width:1000px;text-align:right;">$12.4K</div>
<div class="t" style="top:987px;font-size:18.20px;color:#3f3f3f;left:767.70px;width:1000px;text-align:right;">$10.3K</div>
<div class="t" style="top:988px;font-size:17.80px;color:#5ac85a;left:880.93px;width:1000px;text-align:right;">21%</div>
<svg style="position:absolute;left:1827.07px;top:989.65px" width="12.4" height="12" viewBox="0 0 12.4 12"><polygon points="0,12 6.2,0 12.4,12" fill="#5ac85a"/></svg>
<div style="position:absolute;left:396.00px;top:1030.15px;width:1497.00px;height:1.20px;background:#e6e6e6;"></div>
<div class="t" style="top:1057px;font-size:18.60px;color:#3f3f3f;left:-571.42px;width:1000px;text-align:right;">5</div>
<div class="t" style="top:1057px;font-size:18.99px;color:#3f3f3f;left:468.24px;">Monthly Subscription (Forest Explorer)</div>
<div class="t" style="top:1056px;font-size:19.19px;color:#3f3f3f;left:1171.73px;">In App</div>
<div class="t" style="top:1056px;font-size:19.17px;color:#3f3f3f;left:1382.13px;">56789012</div>
<div class="t" style="top:1057px;font-size:18.50px;color:#3f3f3f;left:667.51px;width:1000px;text-align:right;">$11.1K</div>
<div class="t" style="top:1057px;font-size:18.20px;color:#3f3f3f;left:767.70px;width:1000px;text-align:right;">$12.9K</div>
<div class="t" style="top:1058px;font-size:17.80px;color:#d8324b;left:880.93px;width:1000px;text-align:right;">14%</div>
<svg style="position:absolute;left:1827.07px;top:1059.70px" width="12.4" height="12" viewBox="0 0 12.4 12"><polygon points="0,0 12.4,0 6.2,12" fill="#d8324b"/></svg>
<div style="position:absolute;left:396.00px;top:1100.20px;width:1497.00px;height:1.20px;background:#e6e6e6;"></div>
<div class="t" style="top:1127px;font-size:18.60px;color:#3f3f3f;left:-571.38px;width:1000px;text-align:right;">6</div>
<div class="t" style="top:1126px;font-size:19.00px;color:#3f3f3f;left:468.24px;">Promo Offer - 3 months (Forest Explorer)</div>
<div class="t" style="top:1126px;font-size:19.19px;color:#3f3f3f;left:1171.73px;">In App</div>
<div class="t" style="top:1126px;font-size:19.17px;color:#3f3f3f;left:1381.93px;">67890123</div>
<div class="t" style="top:1127px;font-size:18.50px;color:#3f3f3f;left:667.51px;width:1000px;text-align:right;">$9.64K</div>
<div class="t" style="top:1127px;font-size:18.20px;color:#3f3f3f;left:767.70px;width:1000px;text-align:right;">$8.16K</div>
<div class="t" style="top:1128px;font-size:17.80px;color:#5ac85a;left:880.93px;width:1000px;text-align:right;">18%</div>
<svg style="position:absolute;left:1827.07px;top:1129.75px" width="12.4" height="12" viewBox="0 0 12.4 12"><polygon points="0,12 6.2,0 12.4,12" fill="#5ac85a"/></svg>
<div style="position:absolute;left:396.00px;top:1170.25px;width:1497.00px;height:1.20px;background:#e6e6e6;"></div>
<div class="t" style="top:1197px;font-size:18.60px;color:#3f3f3f;left:-571.26px;width:1000px;text-align:right;">7</div>
<div class="t" style="top:1197px;font-size:18.91px;color:#3f3f3f;left:468.84px;">60 carabiners (Forest Explorer)</div>
<div class="t" style="top:1196px;font-size:19.19px;color:#3f3f3f;left:1171.73px;">In App</div>
<div class="t" style="top:1196px;font-size:19.17px;color:#3f3f3f;left:1381.92px;">78901234</div>
<div class="t" style="top:1197px;font-size:18.50px;color:#3f3f3f;left:667.51px;width:1000px;text-align:right;">$9.42K</div>
<div class="t" style="top:1197px;font-size:18.20px;color:#3f3f3f;left:767.70px;width:1000px;text-align:right;">$13.1K</div>
<div class="t" style="top:1198px;font-size:17.80px;color:#d8324b;left:880.93px;width:1000px;text-align:right;">28%</div>
<svg style="position:absolute;left:1827.07px;top:1199.80px" width="12.4" height="12" viewBox="0 0 12.4 12"><polygon points="0,0 12.4,0 6.2,12" fill="#d8324b"/></svg>
<div style="position:absolute;left:396.00px;top:1240.30px;width:1497.00px;height:1.20px;background:#e6e6e6;"></div>
</body></html>
